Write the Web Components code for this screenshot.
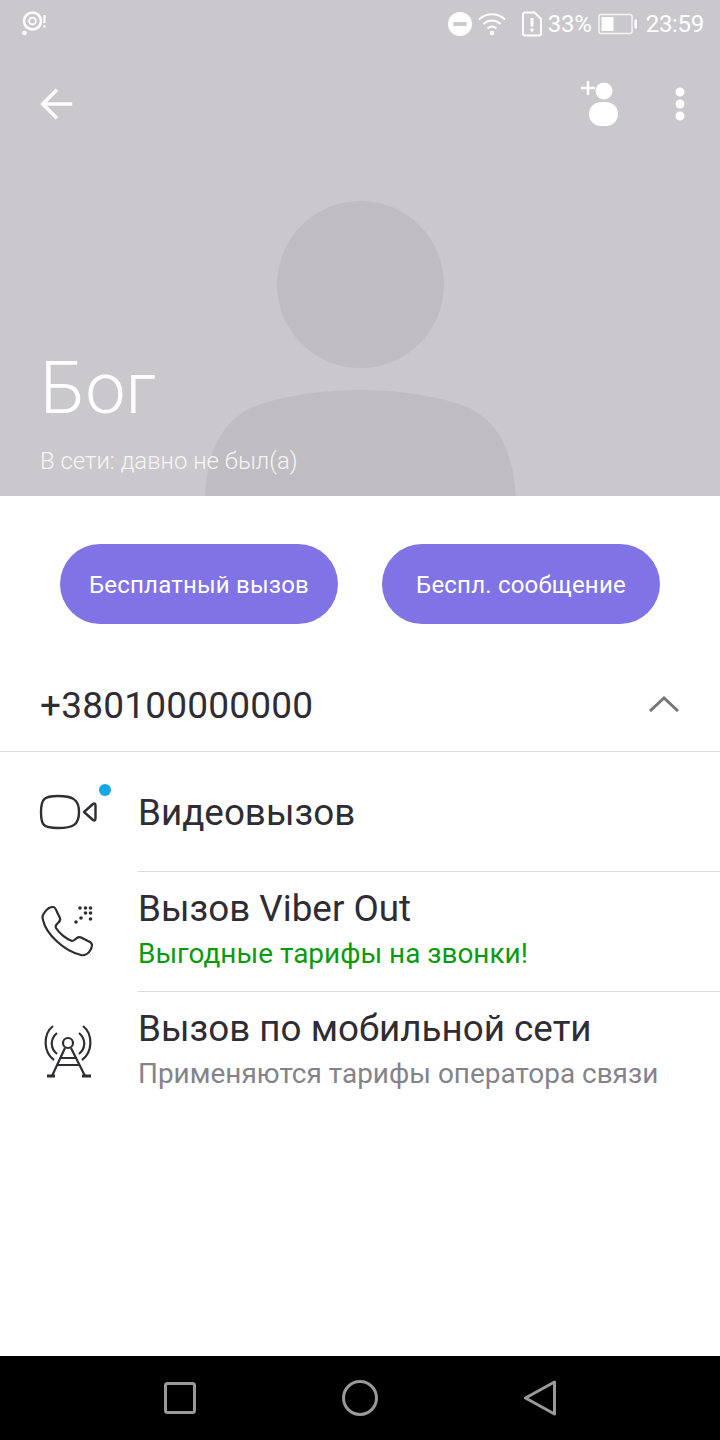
<!DOCTYPE html>
<html lang="ru">
<head>
<meta charset="utf-8">
<style>
html,body{margin:0;padding:0;background:#fff;}
body{font-family:Roboto,"Liberation Sans",sans-serif;width:720px;height:1440px;overflow:hidden;}
app-screen{height:1440px;}
</style>
</head>
<body>
<app-screen>
  <contact-header name="Бог" seen="В сети: давно не был(а)"></contact-header>
  <action-buttons></action-buttons>
  <phone-row number="+380100000000"></phone-row>
  <call-row title="Видеовызов" icon="video" dot></call-row>
  <call-row title="Вызов Viber Out" sub="Выгодные тарифы на звонки!" icon="phone" tone="green" line></call-row>
  <call-row title="Вызов по мобильной сети" sub="Применяются тарифы оператора связи" icon="tower" line></call-row>
  <nav-bar></nav-bar>
</app-screen>

<script>
// contenedor de la pantalla
class AppScreen extends HTMLElement{
  constructor(){
    super();
    this.attachShadow({mode:"open"}).innerHTML=`
      <style>
        :host{display:flex;flex-direction:column;width:720px;background:#fff;}
      </style>
      <slot></slot>`;
  }
}

class StatusBar extends HTMLElement{
  constructor(){
    super();
    this.attachShadow({mode:"open"}).innerHTML=`
      <style>
        :host{display:flex;align-items:center;height:48px;padding:0 16px 0 20px;color:#fff;font-size:24px;letter-spacing:-.2px;}
        svg{display:block;}
        .sp{flex:1;}
        .pct{margin-left:5px;margin-right:6px;}
        .time{margin-left:8px;letter-spacing:-.3px;}
      </style>
      <svg width="28" height="28" viewBox="0 0 28 28" fill="none" stroke="#fff">
        <circle cx="12.500" cy="11" r="8.500" stroke-width="2.600"/>
        <circle cx="12.500" cy="11" r="3.400" stroke-width="1.800"/>
        <circle cx="4.500" cy="23" r="2.300" fill="#fff" stroke="none"/>
        <path d="M24.500 5v8" stroke-width="2.200"/><circle cx="24.500" cy="16.500" r="1.200" fill="#fff" stroke="none"/>
      </svg>
      <div class="sp"></div>
      <svg width="24" height="24" viewBox="0 0 24 24" style="margin-right:5px"><circle cx="12" cy="12" r="12" fill="#fff"/><rect x="5.500" y="10" width="13" height="4" fill="#cac8cc"/></svg>
      <svg width="30" height="26" viewBox="0 0 30 26" fill="none" stroke="#fff" stroke-width="2" style="margin-right:14px">
        <path d="M2 8.500C9.500 1.500 20.500 1.500 28 8.500"/><path d="M6.500 13c5-4.600 12-4.600 17 0"/><path d="M10.500 17.500c3-2.600 6-2.600 9 0"/><circle cx="15" cy="22" r="2.300" fill="#fff" stroke="none"/>
      </svg>
      <svg width="22" height="26" viewBox="0 0 22 26" fill="none"><path d="M2 3.500a2 2 0 0 1 2-2h9.500L20 8v14.500a2 2 0 0 1-2 2H4a2 2 0 0 1-2-2z" stroke="#fff" stroke-width="2"/><path d="M11 7v8.500" stroke="#fff" stroke-width="3"/><circle cx="11" cy="19" r="1.700" fill="#fff"/></svg>
      <span class="pct">33%</span>
      <svg width="40" height="22" viewBox="0 0 40 22" fill="none"><rect x="1" y="1.500" width="33" height="19" rx="2" stroke="#fff" stroke-width="1.500" opacity=".8"/><rect x="3.500" y="4" width="12" height="14" fill="#fff"/><rect x="36.500" y="6.500" width="2.500" height="9" fill="#fff"/></svg>
      <span class="time">23:59</span>`;
  }
}

class ContactHeader extends HTMLElement{
  constructor(){
    super();
    this.attachShadow({mode:"open"}).innerHTML=`
      <style>
        :host{display:block;position:relative;height:496px;background:#cac8cc;overflow:hidden;color:#fff;}
        .photo{position:absolute;left:0;top:0;}
        .inner{position:relative;display:flex;flex-direction:column;height:100%;}
        .tool{display:flex;align-items:center;height:112px;padding:0 35px 0 38px;}
        .sp{flex:1;}
        svg{display:block;}
        .info{margin-top:auto;padding:0 40px 20px;}
        h1{margin:0 0 15px;font-weight:300;font-size:72px;line-height:84px;}
        p{margin:0;font-size:23.900px;line-height:30px;font-weight:300;color:#f6f5f7;}
      </style>
      <svg class="photo" width="720" height="496" viewBox="0 0 720 496" fill="#bfbdc1">
        <circle cx="360.500" cy="284.500" r="83.500"/>
        <path d="M205 496C208 450 220 425 250 408C285 394 330 390 360 390C390 390 435 394 470 408C500 425 512 450 516 496Z"/>
      </svg>
      <div class="inner">
        <status-bar></status-bar>
        <div class="tool">
          <svg width="38" height="40" viewBox="0 0 40 40" fill="none" stroke="#fff" stroke-width="3.600"><path d="M36 20H6"/><path d="M20 5L5 20l15 15"/></svg>
          <div class="sp"></div>
          <svg width="40" height="48" viewBox="0 0 40 48" fill="#fff" style="margin-right:55px">
            <path d="M1 8h14M8 1v14" stroke="#fff" stroke-width="2.400"/>
            <circle cx="24" cy="11" r="8.500"/>
            <rect x="9" y="22" width="29" height="24" rx="12"/>
          </svg>
          <svg width="10" height="34" viewBox="0 0 10 34" fill="#fff"><circle cx="5" cy="5" r="4.500"/><circle cx="5" cy="17" r="4.500"/><circle cx="5" cy="29" r="4.500"/></svg>
        </div>
        <div class="info">
          <h1>${this.getAttribute("name")}</h1>
          <p>${this.getAttribute("seen")}</p>
        </div>
      </div>`;
  }
}

class PillButton extends HTMLElement{
  constructor(){
    super();
    this.attachShadow({mode:"open"}).innerHTML=`
      <style>
        :host{display:flex;align-items:center;justify-content:center;width:278px;height:80px;padding-top:1px;box-sizing:border-box;border-radius:40px;background:#7f73e6;color:#fff;font-size:24px;letter-spacing:.2px;}
      </style>
      <slot></slot>`;
  }
}

class ActionButtons extends HTMLElement{
  constructor(){
    super();
    this.attachShadow({mode:"open"}).innerHTML=`
      <style>
        :host{display:flex;gap:44px;justify-content:center;padding:48px 0 40px;}
      </style>
      <pill-button>Бесплатный вызов</pill-button>
      <pill-button>Беспл. сообщение</pill-button>`;
  }
}

class PhoneRow extends HTMLElement{
  constructor(){
    super();
    this.attachShadow({mode:"open"}).innerHTML=`
      <style>
        :host{display:flex;align-items:center;justify-content:space-between;height:83px;padding:0 41px 4px 40px;border-bottom:1px solid #d9d9db;color:#2f2c33;font-size:37px;letter-spacing:.2px;}
        svg{display:block;margin-bottom:4px;}
      </style>
      <span>${this.getAttribute("number")}</span>
      <svg width="30" height="16" viewBox="0 0 30 16" fill="none" stroke="#77757a" stroke-width="3"><path d="M1 15L15 2l14 13"/></svg>`;
  }
}

const ICONS={
  video:`<svg width="60" height="40" viewBox="0 0 60 40" fill="none" stroke="#2f2c33" stroke-width="2.400" stroke-linejoin="round">
    <path d="M3 20C3 7 6 4 20 4s21 3 21 16-6 16-21 16S3 33 3 20z"/>
    <path d="M46 20l9-8c1.500-1 2.500 0 2.500 1.500v13c0 1.500-1 2.500-2.500 1.500z"/></svg>`,
  phone:`<svg width="60" height="60" viewBox="0 0 60 60" fill="none" stroke="#2f2c33" stroke-width="2.200" stroke-linejoin="round">
    <path d="M7 11C9 8 12 6 15 6C17 6 18 8 19 11L22 17C23 20 21 21 19 23C18 24 17 25 18 27C21 32 28 38 34 40C36 40 37 38 39 37C41 35 43 36 46 38L52 41C55 43 54 45 53 48C51 52 47 55 43 54C26 50 8 33 5 19C4 16 5 13 7 11Z"/>
    <g fill="#2f2c33" stroke="none"><circle cx="42" cy="7" r="1.800"/><circle cx="47.500" cy="7" r="1.800"/><circle cx="52.500" cy="7" r="1.800"/><circle cx="47.500" cy="12" r="1.800"/><circle cx="52.500" cy="12" r="1.800"/><circle cx="43" cy="17" r="1.800"/><circle cx="52.500" cy="18" r="1.800"/><circle cx="38" cy="21" r="1.800"/></g></svg>`,
  tower:`<svg width="60" height="60" viewBox="0 -1 60 60" fill="none" stroke="#2f2c33" stroke-width="2.200">
    <circle cx="30" cy="21" r="5"/>
    <path d="M27 26L14 54M33 26l14 28M22 36h16M19 43h22"/>
    <path d="M9 54h8M44 54h9" stroke-width="2.800"/>
    <path d="M15 4C5 12 5 30 16 38M45 4c10 8 10 26-1 34"/>
    <path d="M19 11C12 17 12 26 19 32M41 11c7 6 7 15 0 21"/></svg>`
};

class CallRow extends HTMLElement{
  constructor(){
    super();
    let sub=this.getAttribute("sub");
    let green=this.getAttribute("tone")=="green";
    this.attachShadow({mode:"open"}).innerHTML=`
      <style>
        :host{display:flex;height:${sub?120:119}px;}
        .ic{position:relative;width:138px;padding-left:38px;box-sizing:border-box;display:flex;align-items:center;}
        .dot{position:absolute;left:99px;top:32px;width:12px;height:12px;border-radius:50%;background:#12a7e8;}
        .tx{flex:1;display:flex;flex-direction:column;color:#2f2c33;box-sizing:border-box;padding-top:${sub?16:40}px;}
        .tx.line{border-top:1px solid #d9d9db;}
        .t{font-size:36.800px;line-height:42px;}
        .s{font-size:27.950px;line-height:38px;margin-top:5px;color:${green?"#0a9a0f":"#85838a"};}
        svg{display:block;}
      </style>
      <div class="ic">${ICONS[this.getAttribute("icon")]}${this.hasAttribute("dot")?'<span class="dot"></span>':''}</div>
      <div class="tx ${this.hasAttribute("line")?"line":""}">
        <div class="t">${this.getAttribute("title")}</div>
        ${sub?`<div class="s">${sub}</div>`:""}
      </div>`;
  }
}

class NavBar extends HTMLElement{
  constructor(){
    super();
    this.attachShadow({mode:"open"}).innerHTML=`
      <style>
        :host{display:flex;align-items:center;justify-content:space-between;height:84px;margin-top:auto;padding:0 162px;background:#000;}
        svg{display:block;}
      </style>
      <svg width="36" height="36" viewBox="0 0 36 36" fill="none" stroke="#9a9a9a" stroke-width="3"><rect x="3.500" y="3.500" width="29" height="29" rx="2"/></svg>
      <svg width="36" height="36" viewBox="0 0 36 36" fill="none" stroke="#9a9a9a" stroke-width="3"><circle cx="18" cy="18" r="16.500"/></svg>
      <svg width="36" height="36" viewBox="0 0 36 36" fill="none" stroke="#9a9a9a" stroke-width="3" stroke-linejoin="round"><path d="M32.500 2v32L3.500 18z"/></svg>`;
  }
}

customElements.define("app-screen",AppScreen);
customElements.define("status-bar",StatusBar);
customElements.define("contact-header",ContactHeader);
customElements.define("pill-button",PillButton);
customElements.define("action-buttons",ActionButtons);
customElements.define("phone-row",PhoneRow);
customElements.define("call-row",CallRow);
customElements.define("nav-bar",NavBar);
</script>
</body>
</html>
